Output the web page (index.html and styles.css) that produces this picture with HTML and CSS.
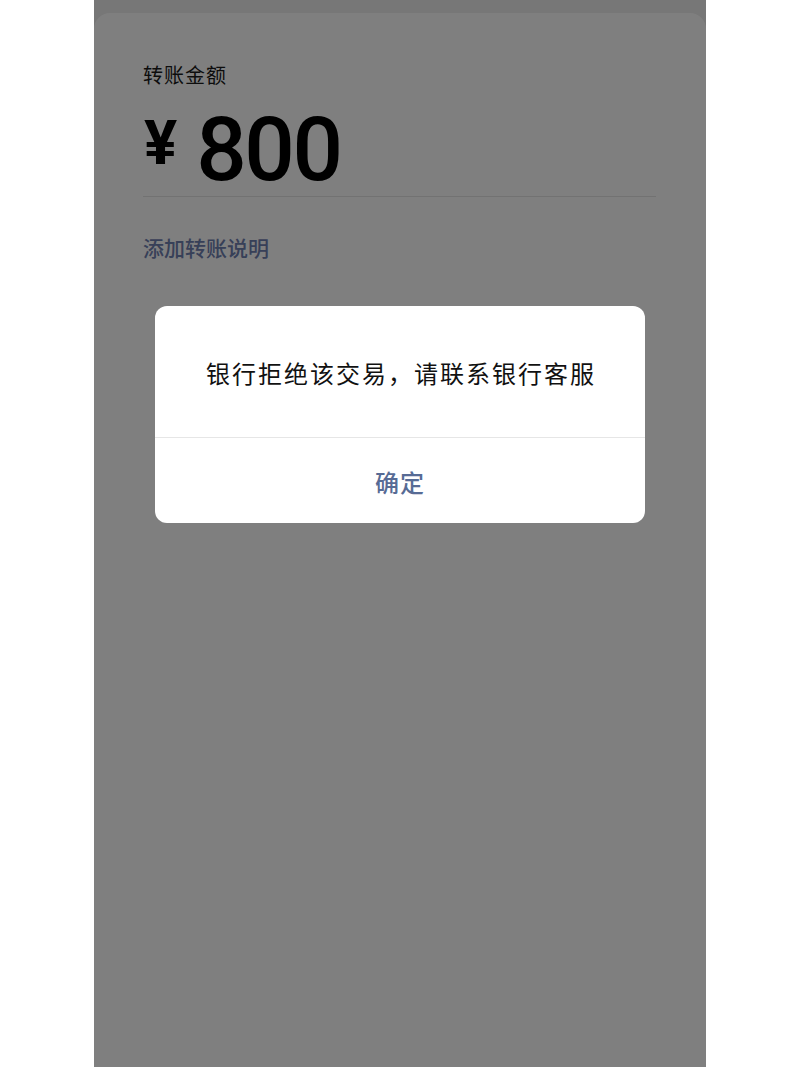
FILE: index.html
```html
<!DOCTYPE html>
<html lang="zh-CN">
<head>
<meta charset="utf-8">
<title>转账</title>
<link rel="stylesheet" href="styles.css">
</head>
<body>
<div class="phone">
  <div class="card">
    <div class="label">转账金额</div>
    <div class="amount">
      <span class="currency">¥</span>
      <span class="value">800</span>
    </div>
    <div class="divider"></div>
    <div class="note-link">添加转账说明</div>
  </div>
  <div class="mask">
    <div class="dialog">
      <div class="dialog-msg">银行拒绝该交易，请联系银行客服</div>
      <div class="dialog-btn">确定</div>
    </div>
  </div>
</div>
</body>
</html>
```
FILE: styles.css
```css
html, body {
  margin: 0;
  padding: 0;
  background: #ffffff;
}
body {
  font-family: "Noto Sans CJK SC", "Noto Sans", sans-serif;
}
.phone {
  position: relative;
  width: 612px;
  height: 1067px;
  margin: 0 auto;
  background: #eeeeee;
  padding-top: 13px;
  box-sizing: border-box;
  overflow: hidden;
}
.card {
  background: #ffffff;
  border-radius: 16px 16px 0 0;
  height: 1054px;
  padding: 50px 50px 0 49px;
  box-sizing: border-box;
}
.label {
  font-size: 20px;
  line-height: 24px;
  color: #1a1a1a;
  letter-spacing: 1px;
}
.amount {
  display: flex;
  align-items: flex-start;
  margin-top: 18px;
  height: 91px;
}
.currency {
  font-family: Roboto, "Liberation Sans", sans-serif;
  font-weight: 700;
  font-size: 62px;
  line-height: 62px;
  margin-top: 7px;
  margin-left: 1px;
  margin-right: 19px;
  color: #000;
}
.value {
  font-family: Roboto, "Liberation Sans", sans-serif;
  font-weight: 500;
  font-size: 89px;
  line-height: 90px;
  color: #000;
  letter-spacing: -2.5px;
}
.divider {
  height: 1px;
  background: #e4e4e4;
}
.note-link {
  margin-top: 36px;
  font-size: 21px;
  line-height: 28px;
  color: #6f80b0;
  font-weight: 500;
}
.mask {
  position: absolute;
  inset: 0;
  background: rgba(0, 0, 0, 0.5);
}
.dialog {
  position: absolute;
  left: 61px;
  top: 306px;
  width: 490px;
  background: #ffffff;
  border-radius: 12px;
  overflow: hidden;
}
.dialog-msg {
  height: 132px;
  box-sizing: border-box;
  padding-top: 2px;
  display: flex;
  align-items: center;
  justify-content: center;
  font-size: 24px;
  letter-spacing: 2px;
  padding-left: 2px;
  color: #111;
  border-bottom: 1px solid #e6e6e6;
}
.dialog-btn {
  height: 85px;
  box-sizing: border-box;
  padding-top: 2px;
  display: flex;
  align-items: center;
  justify-content: center;
  font-size: 24px;
  font-weight: 500;
  letter-spacing: 1px;
  color: #576b95;
}
```
